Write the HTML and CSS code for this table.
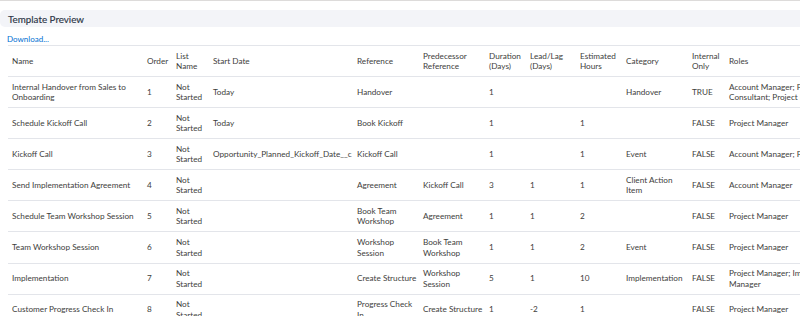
FILE: index.html
```html
<!DOCTYPE html>
<html>
<head>
<meta charset="utf-8">
<link rel="stylesheet" href="styles.css">
</head>
<body>
<div class="page">
  <div class="card-header"><h2 class="title">Template Preview</h2></div>
  <a class="download" href="#">Download...</a>
  <div class="table-wrap">
    <table class="preview">
      <colgroup>
        <col class="c-name"><col class="c-order"><col class="c-list"><col class="c-start"><col class="c-ref"><col class="c-pred"><col class="c-dur"><col class="c-lead"><col class="c-est"><col class="c-cat"><col class="c-int"><col class="c-roles">
      </colgroup>
      <thead>
        <tr><th>Name</th><th>Order</th><th>List Name</th><th>Start Date</th><th>Reference</th><th>Predecessor Reference</th><th>Duration (Days)</th><th>Lead/Lag (Days)</th><th>Estimated Hours</th><th>Category</th><th>Internal Only</th><th>Roles</th></tr>
      </thead>
      <tbody>
        <tr><td>Internal Handover from Sales to Onboarding</td><td>1</td><td>Not Started</td><td>Today</td><td>Handover</td><td></td><td>1</td><td></td><td></td><td>Handover</td><td>TRUE</td><td>Account Manager; Pre-Sales Consultant; Project Manager</td></tr>
        <tr><td>Schedule Kickoff Call</td><td>2</td><td>Not Started</td><td>Today</td><td>Book Kickoff</td><td></td><td>1</td><td></td><td>1</td><td></td><td>FALSE</td><td>Project Manager</td></tr>
        <tr><td>Kickoff Call</td><td>3</td><td>Not Started</td><td>Opportunity_Planned_Kickoff_Date__c</td><td>Kickoff Call</td><td></td><td>1</td><td></td><td>1</td><td>Event</td><td>FALSE</td><td>Account Manager; Project Manager</td></tr>
        <tr><td>Send Implementation Agreement</td><td>4</td><td>Not Started</td><td></td><td>Agreement</td><td>Kickoff Call</td><td>3</td><td>1</td><td>1</td><td>Client Action Item</td><td>FALSE</td><td>Account Manager</td></tr>
        <tr><td>Schedule Team Workshop Session</td><td>5</td><td>Not Started</td><td></td><td>Book Team Workshop</td><td>Agreement</td><td>1</td><td>1</td><td>2</td><td></td><td>FALSE</td><td>Project Manager</td></tr>
        <tr><td>Team Workshop Session</td><td>6</td><td>Not Started</td><td></td><td>Workshop Session</td><td>Book Team Workshop</td><td>1</td><td>1</td><td>2</td><td>Event</td><td>FALSE</td><td>Project Manager</td></tr>
        <tr><td>Implementation</td><td>7</td><td>Not Started</td><td></td><td>Create Structure</td><td>Workshop Session</td><td>5</td><td>1</td><td>10</td><td>Implementation</td><td>FALSE</td><td>Project Manager; Implementation Manager</td></tr>
        <tr><td>Customer Progress Check In</td><td>8</td><td>Not Started</td><td></td><td>Progress Check In</td><td>Create Structure</td><td>1</td><td>-2</td><td>1</td><td></td><td>FALSE</td><td>Project Manager</td></tr>
      </tbody>
    </table>
  </div>
</div>
</body>
</html>
```

FILE: styles.css
```css
html, body {
  margin: 0;
  padding: 0;
  background: #ffffff;
  overflow: hidden;
}
.page {
  border-top: 1px solid #dddbda;
  padding-top: 9px;
  font-family: "Lato", "Open Sans", sans-serif;
  color: #3e3e3c;
  overflow: hidden;
  width: 800px;
}
.card-header {
  background: #f3f4f8;
  border-radius: 5px 0 0 5px;
  height: 17px;
  display: flex;
  align-items: center;
  padding-left: 8px;
}
.title {
  margin: 0;
  font-size: 9.8px;
  font-weight: 400;
  color: #2b3545;
  -webkit-text-stroke: 0.15px #2b3545;
}
.download {
  display: block;
  margin: 6px 0 0 7px;
  height: 12px;
  line-height: 12px;
  font-size: 8px;
  color: #0070d2;
  text-decoration: none;
}
.table-wrap {
  padding-left: 8px;
}
.preview {
  table-layout: fixed;
  border-collapse: separate;
  border-spacing: 0;
  width: 863px;
  font-size: 8.2px;
  line-height: 10.5px;
}
.c-name { width: 135px; }
.c-order { width: 29px; }
.c-list { width: 37px; }
.c-start { width: 144px; }
.c-ref { width: 66px; }
.c-pred { width: 66px; }
.c-dur { width: 41px; }
.c-lead { width: 50px; }
.c-est { width: 46px; }
.c-cat { width: 66px; }
.c-int { width: 37px; }
.c-roles { width: 146px; }
.preview th,
.preview td {
  box-sizing: border-box;
  height: 31.1px;
  padding: 0 2px 0 4px;
  text-align: left;
  vertical-align: middle;
  font-weight: 400;
  border-bottom: 1px solid #e3e5ea;
  overflow: hidden;
}
.preview th {
  border-top: 1px solid #e3e5ea;
  height: 32px;
}
```
